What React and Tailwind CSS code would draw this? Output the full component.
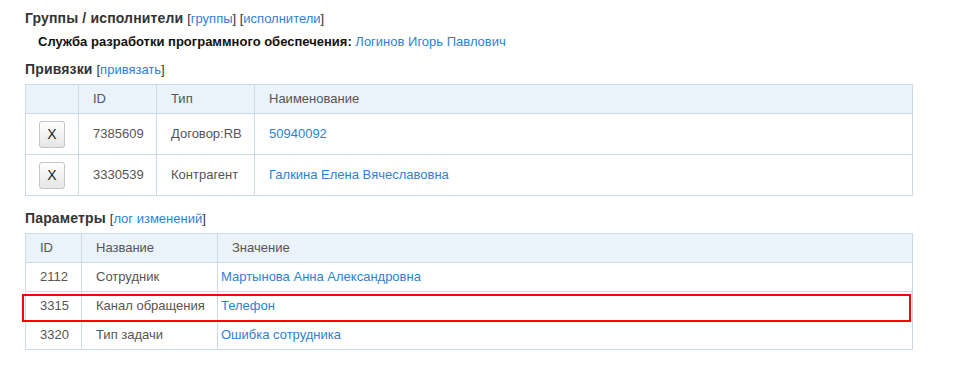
import React from 'react';

const links = [
  { id: '7385609', type: 'Договор:RB', name: '50940092' },
  { id: '3330539', type: 'Контрагент', name: 'Галкина Елена Вячеславовна' },
];

const params = [
  { id: '2112', name: 'Сотрудник', value: 'Мартынова Анна Александровна' },
  { id: '3315', name: 'Канал обращения', value: 'Телефон', marked: true },
  { id: '3320', name: 'Тип задачи', value: 'Ошибка сотрудника' },
];

const Link = ({ children }) => (
  <a href="#" className="text-[#2f7fd6] hover:underline">{children}</a>
);

const Heading = ({ title, children }) => (
  <div className="text-[14px] leading-[20px] text-[#333]">
    <span className="font-bold tracking-[0.15px]">{title}</span> {children}
  </div>
);

const App = () => {
  return (
    <div className="relative w-[954px] h-[381px] bg-white text-[13px] text-[#555]" style={{ fontFamily: '"Liberation Sans", Arial, sans-serif' }}>
      <div className="px-[25px] pt-[8px] w-[913px] box-content">
        <Heading title="Группы / исполнители">
          <span className="font-normal text-[13px]">[<Link>группы</Link>] [<Link>исполнители</Link>]</span>
        </Heading>
        <div className="pl-[13px] mt-[3px] leading-[20px] text-[13px]">
          <span className="font-bold text-[#111]">Служба разработки программного обеспечения:</span>{' '}
          <Link>Логинов Игорь Павлович</Link>
        </div>

        <div className="mt-[7px]">
          <Heading title="Привязки">
            <span className="text-[13px]">[<Link>привязать</Link>]</span>
          </Heading>
        </div>

        <table className="mt-[4px] w-[888px] border-collapse border border-[#cadbe7]">
          <thead>
            <tr className="bg-[#eaf2fa] h-[29px]">
              <th className="w-[53px] border border-[#cadbe7]"></th>
              <th className="w-[78px] border border-[#cadbe7] text-left font-normal pl-[14px]">ID</th>
              <th className="w-[98px] border border-[#cadbe7] text-left font-normal pl-[14px]">Тип</th>
              <th className="border border-[#cadbe7] text-left font-normal pl-[14px]">Наименование</th>
            </tr>
          </thead>
          <tbody>
            {links.map((r) => (
              <tr key={r.id} className="h-[41px]">
                <td className="border border-[#cadbe7] text-center">
                  <button className="w-[26px] h-[27px] rounded-[3px] border border-[#c4c4c4] bg-gradient-to-b from-white to-[#e6e6e6] text-[#222] text-[14px] leading-none">X</button>
                </td>
                <td className="border border-[#cadbe7] pl-[14px]">{r.id}</td>
                <td className="border border-[#cadbe7] pl-[14px]">{r.type}</td>
                <td className="border border-[#cadbe7] pl-[14px]"><Link>{r.name}</Link></td>
              </tr>
            ))}
          </tbody>
        </table>

        <div className="mt-[12px]">
          <Heading title="Параметры">
            <span className="text-[13px]">[<Link>лог изменений</Link>]</span>
          </Heading>
        </div>

        <table className="mt-[4px] w-[888px] border-collapse border border-[#cadbe7]">
          <thead>
            <tr className="bg-[#eaf2fa] h-[29px]">
              <th className="w-[56px] border border-[#cadbe7] text-left font-normal pl-[14px]">ID</th>
              <th className="w-[136px] border border-[#cadbe7] text-left font-normal pl-[14px]">Название</th>
              <th className="border border-[#cadbe7] text-left font-normal pl-[14px]">Значение</th>
            </tr>
          </thead>
          <tbody>
            {params.map((p) => (
              <tr key={p.id} className="h-[29px]">
                <td className="border border-[#cadbe7] pl-[14px]">{p.id}</td>
                <td className="border border-[#cadbe7] pl-[14px]">{p.name}</td>
                <td className="border border-[#cadbe7] pl-[3px]"><Link>{p.value}</Link></td>
              </tr>
            ))}
          </tbody>
        </table>
      </div>

      {/* annotation frame over the highlighted row */}
      <div className="absolute left-[22px] top-[294px] w-[889px] h-[28px] border-2 border-[#f00] pointer-events-none"></div>
    </div>
  );
};

export default App;
